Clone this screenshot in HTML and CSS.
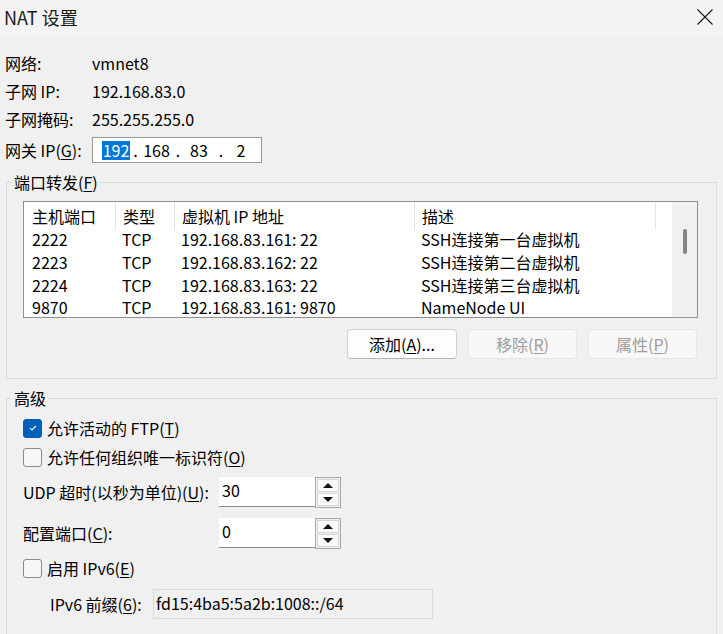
FILE: index.html
```html
<!DOCTYPE html>
<html lang="zh-CN">
<head>
<meta charset="utf-8">
<title>NAT 设置</title>
<link rel="stylesheet" href="styles.css">
</head>
<body>
<div class="window">
  <header class="titlebar">
    <span class="title">NAT 设置</span>
    <svg class="close" width="16" height="16" viewBox="0 0 16 16" aria-label="关闭"><path d="M0.5 0.5 L15.5 15.5 M15.5 0.5 L0.5 15.5" stroke="#1a1a1a" stroke-width="1.1" fill="none"/></svg>
  </header>
  <main class="content">
    <div class="info">
      <div class="info-row"><span class="lbl">网络:</span><span>vmnet8</span></div>
      <div class="info-row"><span class="lbl">子网 IP:</span><span>192.168.83.0</span></div>
      <div class="info-row"><span class="lbl">子网掩码:</span><span>255.255.255.0</span></div>
      <div class="info-row ip-row"><span class="lbl">网关 IP(<u>G</u>):</span>
        <div class="ipbox">
          <span class="oct o1 sel">192</span><span class="dot d1">.</span><span class="oct o2">168</span><span class="dot d2">.</span><span class="oct o3">83</span><span class="dot d3">.</span><span class="oct o4">2</span>
        </div>
      </div>
    </div>

    <fieldset class="group">
      <legend>端口转发(<u>F</u>)</legend>
      <div class="group-inner pf">
        <div class="list">
          <div class="table">
            <div class="row head"><span>主机端口</span><span>类型</span><span>虚拟机 IP 地址</span><span>描述</span><span></span></div>
            <div class="row"><span>2222</span><span>TCP</span><span>192.168.83.161: 22</span><span>SSH连接第一台虚拟机</span><span></span></div>
            <div class="row"><span>2223</span><span>TCP</span><span>192.168.83.162: 22</span><span>SSH连接第二台虚拟机</span><span></span></div>
            <div class="row"><span>2224</span><span>TCP</span><span>192.168.83.163: 22</span><span>SSH连接第三台虚拟机</span><span></span></div>
            <div class="row last"><span>9870</span><span>TCP</span><span>192.168.83.161: 9870</span><span>NameNode UI</span><span></span></div>
          </div>
          <div class="scrollbar"><div class="thumb"></div></div>
        </div>
        <div class="buttons">
          <button class="btn">添加(<u>A</u>)...</button>
          <button class="btn disabled">移除(<u>R</u>)</button>
          <button class="btn disabled">属性(<u>P</u>)</button>
        </div>
      </div>
    </fieldset>

    <fieldset class="group adv">
      <legend>高级</legend>
      <div class="group-inner">
        <div class="cb-row r1"><span class="cb checked"><svg width="10" height="8" viewBox="0 0 10 8"><path d="M2 4.2 L4 6 L8 2" stroke="#fff" stroke-width="1.1" fill="none"/></svg></span><span class="cb-lbl">允许活动的 FTP(<u>T</u>)</span></div>
        <div class="cb-row r2"><span class="cb"></span><span class="cb-lbl">允许任何组织唯一标识符(<u>O</u>)</span></div>
        <div class="field-row r3"><span class="flbl">UDP 超时(以秒为单位)(<u>U</u>):</span>
          <div class="spin"><div class="spin-input">30</div><div class="spin-btns"><span class="sb"><i class="up"></i></span><span class="sb"><i class="down"></i></span></div></div>
        </div>
        <div class="field-row r4"><span class="flbl">配置端口(<u>C</u>):</span>
          <div class="spin"><div class="spin-input">0</div><div class="spin-btns"><span class="sb"><i class="up"></i></span><span class="sb"><i class="down"></i></span></div></div>
        </div>
        <div class="cb-row r5"><span class="cb"></span><span class="cb-lbl">启用 IPv6(<u>E</u>)</span></div>
        <div class="field-row r6"><span class="plbl">IPv6 前缀(<u>6</u>):</span><div class="prefix">fd15:4ba5:5a2b:1008::/64</div></div>
      </div>
    </fieldset>
  </main>
</div>
</body>
</html>
```
FILE: styles.css
```css
* { box-sizing: border-box; }
html, body { margin: 0; padding: 0; }
body {
  width: 723px;
  height: 634px;
  overflow: hidden;
  background: #f0f0f0;
  font-family: "Noto Sans CJK SC", sans-serif;
  font-size: 16px;
  color: #000;
}
u { text-decoration: underline; text-underline-offset: 2px; text-decoration-thickness: 1px; }

.titlebar {
  height: 38px;
  background: #f3f3f3;
  display: flex;
  justify-content: space-between;
  align-items: flex-start;
  padding: 0 10px 0 4px;
}
.title { font-size: 18px; line-height: 34px; color: #1a1a1a; }
.close { margin-top: 9px; }

.content { padding-top: 11px; }

.info { padding-left: 5px; }
.info-row { display: flex; align-items: center; height: 28px; line-height: 27px; }
.lbl { width: 87px; flex: none; }
.ip-row { margin-top: 4px; height: 26px; }
.ipbox {
  width: 170px;
  height: 26px;
  background: #fff;
  border: 1px solid #9a9a9a;
  display: flex;
  align-items: center;
  padding-left: 9px;
  line-height: 19px;
}
.oct, .dot { text-align: center; display: block; height: 19px; }
.sel { background: #0078d7; color: #fff; }
.o1 { width: 28px; }
.d1 { width: 11px; }
.o2 { width: 31px; }
.d2 { width: 12px; }
.o3 { width: 30px; }
.d3 { width: 14px; }
.o4 { width: 26px; }

.group {
  margin: 9px 6px 0;
  padding: 0;
  border: 1px solid #dcdcdc;
  min-width: 0;
}
.group legend {
  margin-left: 5px;
  padding: 0 2px;
  line-height: 20px;
}
.group-inner { padding: 9px 18px 19px 16px; }

.list {
  height: 117px;
  border: 1px solid #8c8f94;
  background: #fff;
  display: flex;
}
.table { flex: 1; }
.row {
  display: grid;
  grid-template-columns: 91px 59px 240px 241px 1fr;
  height: 23px;
  line-height: 22px;
  white-space: nowrap;
}
.row.last { height: 20px; line-height: 20px; }
.row span { padding-left: 7px; }
.row span:first-child { padding-left: 8px; }
.row.head { height: 26px; line-height: 28px; }
.row.head span + span { border-left: 1px solid #e5e5e5; }
.scrollbar { width: 25px; background: #f0f0f0; padding: 27px 0 0 11px; }
.thumb { width: 4px; height: 25px; border-radius: 2px; background: #858585; }

.buttons {
  display: flex;
  justify-content: flex-end;
  gap: 11px;
  margin-top: 11px;
  padding-right: 1px;
}
.btn {
  width: 110px;
  height: 30px;
  font: inherit;
  color: #000;
  background: #fdfdfd;
  border: 1px solid #d0d0d0;
  border-bottom-color: #b5b5b5;
  border-radius: 4px;
  padding: 0;
  line-height: 26px;
}
.btn.disabled {
  width: 109px;
  background: #f8f8f8;
  border-color: #e6e6e6;
  color: #9d9d9d;
}

.adv .group-inner { padding-top: 8px; padding-bottom: 40px; }
.cb-row { display: flex; align-items: center; height: 24px; }
.r2 { margin-top: 5px; }
.r5 { margin-top: 8px; }
.cb {
  width: 19px;
  height: 19px;
  border: 1px solid #8a8a8a;
  border-radius: 3px;
  background: #f7f7f7;
  flex: none;
  display: flex;
  align-items: center;
  justify-content: center;
}
.cb.checked { background: #005fb8; border-color: #005fb8; }
.cb-lbl { margin-left: 5px; }

.field-row { display: flex; align-items: center; height: 30px; }
.r3 { margin-top: 8px; }
.r4 { margin-top: 11px; }
.r6 { margin-top: 9px; }
.flbl { width: 196px; flex: none; }
.spin { display: flex; height: 30px; }
.spin-input {
  width: 96px;
  height: 30px;
  background: #fff;
  border-bottom: 1px solid #8a8a8a;
  padding: 0 0 0 3px;
  line-height: 26px;
}
.spin-btns {
  width: 26px;
  height: 31px;
  border: 1px solid #a8a8a8;
  background: #f0f0f0;
  display: flex;
  flex-direction: column;
  gap: 1px;
  padding: 1px;
}
.sb {
  flex: 1;
  border: 1px solid #d6d6d6;
  background: #f9f9f9;
  display: flex;
  align-items: center;
  justify-content: center;
}
.up { width: 0; height: 0; border-left: 5px solid transparent; border-right: 5px solid transparent; border-bottom: 5px solid #111; }
.down { width: 0; height: 0; border-left: 5px solid transparent; border-right: 5px solid transparent; border-top: 5px solid #111; }

.plbl { margin-left: 27px; width: 103px; flex: none; }
.prefix {
  width: 280px;
  height: 30px;
  border: 1px solid #dadada;
  background: #f0f0f0;
  padding-left: 2px;
  line-height: 26px;
}
```
